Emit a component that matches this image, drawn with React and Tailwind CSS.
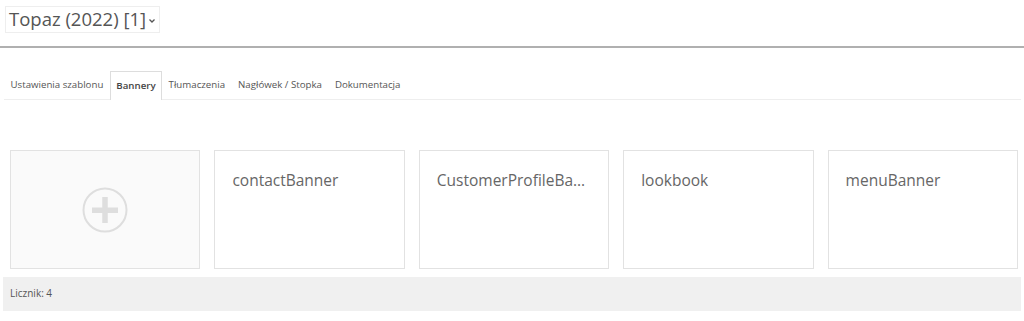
import React from 'react';

const banners = ['contactBanner', 'CustomerProfileBanner', 'lookbook', 'menuBanner'];
const tabs = ['Ustawienia szablonu', 'Bannery', 'Tłumaczenia', 'Nagłówek / Stopka', 'Dokumentacja'];

const PlusIcon = () => (
  <svg width="48" height="48" viewBox="0 0 48 48">
    <circle cx="24" cy="24" r="21.5" fill="none" stroke="#dedede" strokeWidth="2" />
    <rect x="11" y="21.5" width="26" height="5.5" fill="#dedede" />
    <rect x="21.25" y="11" width="5.5" height="26" fill="#dedede" />
  </svg>
);

const App = () => {
  return (
    <div className="w-[1024px] h-[321px] bg-white text-[#555] font-['Open_Sans',sans-serif] overflow-hidden">
      <div className="h-[48px] border-b-2 border-[#b0b0b0] pl-[5px] pt-[6px]">
        <div className="inline-flex items-center h-[27px] border border-[#eeeeee] pl-[3px] pr-[3px] text-[18.5px] leading-none text-[#555]">
          Topaz (2022) [1]
          <svg width="8" height="6" viewBox="0 0 8 6" className="ml-[2px] mt-[2px]">
            <path d="M1.5 1.5 L4 4 L6.5 1.5" fill="none" stroke="#555" strokeWidth="1.3" />
          </svg>
        </div>
      </div>

      <div className="mt-[23px] ml-[4px] mr-[3px] flex border-b border-[#eeeeee] h-[29px]">
        {tabs.map((t) => (
          <div
            key={t}
            className={
              t === 'Bannery'
                ? 'px-[5.5px] h-[29px] flex items-center text-[9.7px] font-semibold text-[#444] bg-white border border-b-0 border-[#dddddd] -mb-px'
                : 'px-[5.5px] h-[29px] flex items-center text-[9.7px] text-[#555] border border-transparent'
            }
          >
            {t}
          </div>
        ))}
      </div>

      <div className="grid grid-cols-5 gap-x-[14px] px-[10px] pr-[6px] mt-[50px]">
        <div className="h-[119px] border border-[#e2e2e2] bg-[#fafafa] flex items-center justify-center">
          <PlusIcon />
        </div>
        {banners.map((b) => (
          <div key={b} className="h-[119px] border border-[#e2e2e2] bg-white pl-[17px] pr-[15px] pt-[18px]">
            <div className="text-[15.5px] leading-[22px] text-[#666] truncate">{b}</div>
          </div>
        ))}
      </div>

      <div className="mt-[8px] mx-[3px] h-[34px] bg-[#f0f0f0] flex items-center pl-[7px] pb-[2px] text-[10px] text-[#555]">
        Licznik: 4
      </div>
    </div>
  );
};

export default App;
